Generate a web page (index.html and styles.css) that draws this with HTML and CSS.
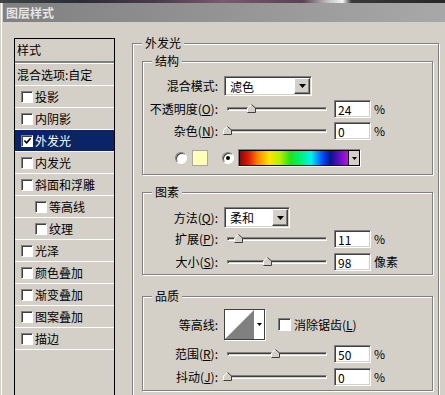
FILE: index.html
```html
<!DOCTYPE html>
<html lang="zh-CN">
<head>
  <meta charset="UTF-8">
  <title>图层样式</title>
  <link rel="stylesheet" href="styles.css">
</head>
<body>

<div class="photo-strip"></div>

<div class="window">
  <div class="titlebar">图层样式</div>

  <div class="main">
    <!-- left: style list -->
    <div class="style-list">
      <div class="list-head">样式</div>
      <div class="list-item blend">混合选项:自定</div>
      <div class="list-item"><span class="check"></span>投影</div>
      <div class="list-item"><span class="check"></span>内阴影</div>
      <div class="list-item selected"><span class="check"><svg width="10" height="10" viewBox="0 0 10 10"><polyline points="1.5,4.5 4,7 8.5,2" fill="none" stroke="#000" stroke-width="1.8"/></svg></span>外发光</div>
      <div class="list-item"><span class="check"></span>内发光</div>
      <div class="list-item"><span class="check"></span>斜面和浮雕</div>
      <div class="list-item sub"><span class="check"></span>等高线</div>
      <div class="list-item sub"><span class="check"></span>纹理</div>
      <div class="list-item"><span class="check"></span>光泽</div>
      <div class="list-item"><span class="check"></span>颜色叠加</div>
      <div class="list-item"><span class="check"></span>渐变叠加</div>
      <div class="list-item"><span class="check"></span>图案叠加</div>
      <div class="list-item"><span class="check"></span>描边</div>
    </div>

    <!-- right: outer glow settings -->
    <fieldset class="group outer">
      <legend>外发光</legend>

      <fieldset class="group structure">
        <legend>结构</legend>
        <div class="row tall">
          <span class="lbl">混合模式:</span>
          <div class="select blend-mode">
            <span class="select-text">滤色</span>
            <span class="drop-btn"><svg width="7" height="4" viewBox="0 0 7 4"><polygon points="0,0 7,0 3.5,4" fill="#000"/></svg></span>
          </div>
        </div>
        <div class="row gap4">
          <span class="lbl">不透明度(<u>O</u>):</span>
          <div class="slider"><span class="thumb" style="left:24%"><svg width="9" height="9" viewBox="0 0 9 9"><polygon points="0.5,8.5 0.5,4 4.5,0.5 8.5,4 8.5,8.5" fill="#d4d0c8"/><polyline points="0.5,8 0.5,4 4.5,0.5" fill="none" stroke="#fff"/><polyline points="4.5,0.5 8.5,4 8.5,8.5 0.5,8.5" fill="none" stroke="#404040"/></svg></span></div>
          <div class="field">24</div><span class="unit">%</span>
        </div>
        <div class="row gap4">
          <span class="lbl">杂色(<u>N</u>):</span>
          <div class="slider"><span class="thumb" style="left:0%"><svg width="9" height="9" viewBox="0 0 9 9"><polygon points="0.5,8.5 0.5,4 4.5,0.5 8.5,4 8.5,8.5" fill="#d4d0c8"/><polyline points="0.5,8 0.5,4 4.5,0.5" fill="none" stroke="#fff"/><polyline points="4.5,0.5 8.5,4 8.5,8.5 0.5,8.5" fill="none" stroke="#404040"/></svg></span></div>
          <div class="field">0</div><span class="unit">%</span>
        </div>
        <div class="row color-row">
          <span class="radio"></span>
          <span class="swatch"></span>
          <span class="radio second"><span class="dot"></span></span>
          <div class="gradient">
            <span class="grad-fill"></span>
            <span class="grad-btn"><svg width="5" height="3" viewBox="0 0 5 3"><polygon points="0,0 5,0 2.5,3" fill="#000"/></svg></span>
          </div>
        </div>
      </fieldset>

      <fieldset class="group elements">
        <legend>图素</legend>
        <div class="row tall">
          <span class="lbl">方法(<u>Q</u>):</span>
          <div class="select method">
            <span class="select-text">柔和</span>
            <span class="drop-btn"><svg width="7" height="4" viewBox="0 0 7 4"><polygon points="0,0 7,0 3.5,4" fill="#000"/></svg></span>
          </div>
        </div>
        <div class="row gap2">
          <span class="lbl">扩展(<u>P</u>):</span>
          <div class="slider"><span class="thumb" style="left:11%"><svg width="9" height="9" viewBox="0 0 9 9"><polygon points="0.5,8.5 0.5,4 4.5,0.5 8.5,4 8.5,8.5" fill="#d4d0c8"/><polyline points="0.5,8 0.5,4 4.5,0.5" fill="none" stroke="#fff"/><polyline points="4.5,0.5 8.5,4 8.5,8.5 0.5,8.5" fill="none" stroke="#404040"/></svg></span></div>
          <div class="field">11</div><span class="unit">%</span>
        </div>
        <div class="row gap5">
          <span class="lbl">大小(<u>S</u>):</span>
          <div class="slider"><span class="thumb" style="left:41%"><svg width="9" height="9" viewBox="0 0 9 9"><polygon points="0.5,8.5 0.5,4 4.5,0.5 8.5,4 8.5,8.5" fill="#d4d0c8"/><polyline points="0.5,8 0.5,4 4.5,0.5" fill="none" stroke="#fff"/><polyline points="4.5,0.5 8.5,4 8.5,8.5 0.5,8.5" fill="none" stroke="#404040"/></svg></span></div>
          <div class="field">98</div><span class="unit">像素</span>
        </div>
      </fieldset>

      <fieldset class="group quality">
        <legend>品质</legend>
        <div class="row contour-row">
          <span class="lbl">等高线:</span>
          <div class="contour">
            <svg width="29" height="29" viewBox="0 0 29 29"><rect width="29" height="29" fill="#fff"/><polygon points="0,29 29,0 29,29" fill="#808080"/></svg>
            <span class="contour-btn"><svg width="5" height="3" viewBox="0 0 5 3"><polygon points="0,0 5,0 2.5,3" fill="#000"/></svg></span>
          </div>
          <span class="check anti"></span>
          <span class="check-text">消除锯齿(<u>L</u>)</span>
        </div>
        <div class="row gap5">
          <span class="lbl">范围(<u>R</u>):</span>
          <div class="slider"><span class="thumb" style="left:49%"><svg width="9" height="9" viewBox="0 0 9 9"><polygon points="0.5,8.5 0.5,4 4.5,0.5 8.5,4 8.5,8.5" fill="#d4d0c8"/><polyline points="0.5,8 0.5,4 4.5,0.5" fill="none" stroke="#fff"/><polyline points="4.5,0.5 8.5,4 8.5,8.5 0.5,8.5" fill="none" stroke="#404040"/></svg></span></div>
          <div class="field">50</div><span class="unit">%</span>
        </div>
        <div class="row gap5">
          <span class="lbl">抖动(<u>J</u>):</span>
          <div class="slider"><span class="thumb" style="left:0%"><svg width="9" height="9" viewBox="0 0 9 9"><polygon points="0.5,8.5 0.5,4 4.5,0.5 8.5,4 8.5,8.5" fill="#d4d0c8"/><polyline points="0.5,8 0.5,4 4.5,0.5" fill="none" stroke="#fff"/><polyline points="4.5,0.5 8.5,4 8.5,8.5 0.5,8.5" fill="none" stroke="#404040"/></svg></span></div>
          <div class="field">0</div><span class="unit">%</span>
        </div>
      </fieldset>
    </fieldset>
  </div>
</div>

</body>
</html>
```

FILE: styles.css
```css
* {
  box-sizing: border-box;
}
body {
  margin: 0;
  height: 395px;
  overflow: hidden;
  background: #d4d0c8;
  font-family: "Noto Sans CJK SC", "DejaVu Sans", sans-serif;
  font-size: 12px;
  line-height: 16px;
  color: #000;
}
u {
  text-decoration-thickness: 1px;
  text-underline-offset: 1px;
}

/* strip of the photo behind the dialog */
.photo-strip {
  height: 3px;
  background: linear-gradient(to right, #3c4644 0%, #2c2c38 18%, #4a3a4c 35%, #7a5a6c 50%, #5a4052 68%, #c8c8c8 74%, #f4f4f4 77%, #3a3a3a 79%, #262626 100%);
}

.window {
  height: 392px;
  overflow: hidden;
  border-left: 1px solid #d4d0c8;
  box-shadow: inset 1px 0 0 #fff;
  padding-left: 2px;
}
.titlebar {
  height: 19px;
  line-height: 19px;
  padding-left: 3px;
  background: linear-gradient(to right, #808080, #a8a8a8);
  color: #e4e4e4;
  font-weight: bold;
}
.main {
  display: flex;
  align-items: flex-start;
  height: 373px;
  overflow: hidden;
  padding: 13px 0 0 11px;
}

/* style list */
.style-list {
  flex-shrink: 0;
  width: 101px;
  height: 370px;
  margin-top: 3px;
  border: 1px solid #000;
}
.list-head {
  height: 24px;
  padding: 3px 0 0 2px;
  border-bottom: 2px solid #808080;
}
.list-item {
  display: flex;
  align-items: center;
  height: 22px;
  padding-left: 6px;
  border-bottom: 1px solid #fff;
}
.list-item.blend {
  height: 23px;
  padding-left: 2px;
  border-top: 1px solid #fff;
}
.list-item.sub {
  padding-left: 20px;
}
.list-item.selected {
  background: #0a246a;
  color: #fff;
}
.check {
  display: flex;
  align-items: center;
  justify-content: center;
  flex-shrink: 0;
  width: 12px;
  height: 12px;
  margin-right: 2px;
  background: #fff;
  border: 1px solid;
  border-color: #808080 #fff #fff #808080;
  box-shadow: inset 1px 1px 0 #404040;
}
.check svg {
  margin: 1px 0 0 1px;
}

/* etched group boxes */
.group {
  margin: 0;
  padding: 0;
  min-width: 0;
  border: 1px solid #808080;
  box-shadow: inset 1px 1px 0 #fff, 1px 1px 0 #fff;
}
.group legend {
  margin-left: 9px;
  padding: 0 3px;
  line-height: 16px;
  background: #d4d0c8;
}
.outer {
  flex-shrink: 0;
  width: 307px;
  margin-left: 17px;
  padding: 2px 5px 20px 9px;
}
.outer > legend {
  margin-left: 0;
}
.structure {
  padding: 6px 0 7px;
}
.elements {
  margin-top: 9px;
  padding: 7px 0 3px;
}
.quality {
  margin-top: 13px;
  padding: 5px 0 4px;
}

/* rows */
.row {
  display: flex;
  align-items: center;
  height: 18px;
}
.row.tall {
  height: 21px;
}
.gap2 { margin-top: 2px; }
.gap4 { margin-top: 4px; }
.gap5 { margin-top: 5px; }
.lbl {
  flex-shrink: 0;
  width: 75px;
  text-align: right;
  white-space: nowrap;
}

.select {
  display: flex;
  height: 20px;
  margin-left: 6px;
  padding: 1px;
  background: #fff;
  border: 1px solid;
  border-color: #808080 #fff #fff #808080;
  box-shadow: inset 1px 1px 0 #404040, inset -1px -1px 0 #d4d0c8;
}
.select.blend-mode {
  width: 88px;
}
.select.method {
  width: 66px;
  height: 21px;
}
.select-text {
  flex: 1;
  padding: 1px 0 0 4px;
  line-height: 15px;
}
.drop-btn {
  display: flex;
  align-items: center;
  justify-content: center;
  width: 16px;
  background: #d4d0c8;
  border: 1px solid;
  border-color: #fff #404040 #404040 #fff;
  box-shadow: inset -1px -1px 0 #808080;
}

.slider {
  position: relative;
  flex-shrink: 0;
  width: 100px;
  height: 4px;
  margin-left: 9px;
  background: #d4d0c8;
  border: 1px solid;
  border-color: #808080 #fff #fff #808080;
  box-shadow: inset 1px 1px 0 #404040;
}
.thumb {
  position: absolute;
  top: -4px;
  margin-left: -5px;
  display: block;
  width: 9px;
  height: 9px;
}
.thumb svg {
  display: block;
}
.field {
  flex-shrink: 0;
  width: 37px;
  height: 18px;
  margin-left: 7px;
  padding: 1px 0 0 3px;
  line-height: 15px;
  background: #fff;
  border: 1px solid;
  border-color: #808080 #fff #fff #808080;
  box-shadow: inset 1px 1px 0 #404040, inset -1px -1px 0 #d4d0c8;
}
.unit {
  margin-left: 3px;
}

/* colour row */
.color-row {
  margin-top: 9px;
  padding-left: 32px;
}
.radio {
  display: flex;
  align-items: center;
  justify-content: center;
  flex-shrink: 0;
  width: 12px;
  height: 12px;
  border-radius: 50%;
  background: #fff;
  border: 1px solid;
  border-color: #808080 #fff #fff #808080;
  box-shadow: inset 1px 1px 0 #404040;
}
.radio.second {
  margin-left: 14px;
}
.dot {
  width: 4px;
  height: 4px;
  border-radius: 50%;
  background: #000;
}
.swatch {
  width: 16px;
  height: 16px;
  margin-left: 5px;
  background: #ffffb8;
  border: 1px solid #a8a8a0;
}
.gradient {
  display: flex;
  width: 123px;
  height: 18px;
  margin-left: 4px;
  border: 1px solid;
  border-color: #808080 #fff #fff #808080;
}
.grad-fill {
  flex: 1;
  border: 1px solid #000;
  background: linear-gradient(to right, #8a0a0a 0%, #e01a08 8%, #ff8a00 17%, #ffe400 27%, #b4f000 37%, #20e020 47%, #00f070 55%, #00f0f0 66%, #0050ff 76%, #101090 84%, #6010c0 92%, #c010e0 100%);
}
.grad-btn {
  display: flex;
  align-items: center;
  justify-content: center;
  width: 11px;
  background: #d4d0c8;
  border: 1px solid #000;
  border-left: none;
}

/* quality */
.contour-row {
  height: 31px;
}
.contour {
  display: flex;
  width: 41px;
  height: 31px;
  margin-left: 6px;
  background: #fff;
  border: 1px solid #404040;
  box-shadow: 1px 1px 0 #fff;
}
.contour svg {
  display: block;
}
.contour-btn {
  display: flex;
  align-items: center;
  justify-content: center;
  flex: 1;
}
.check.anti {
  width: 13px;
  height: 13px;
  margin-left: 13px;
}
.check-text {
  margin-left: 1px;
}
```
